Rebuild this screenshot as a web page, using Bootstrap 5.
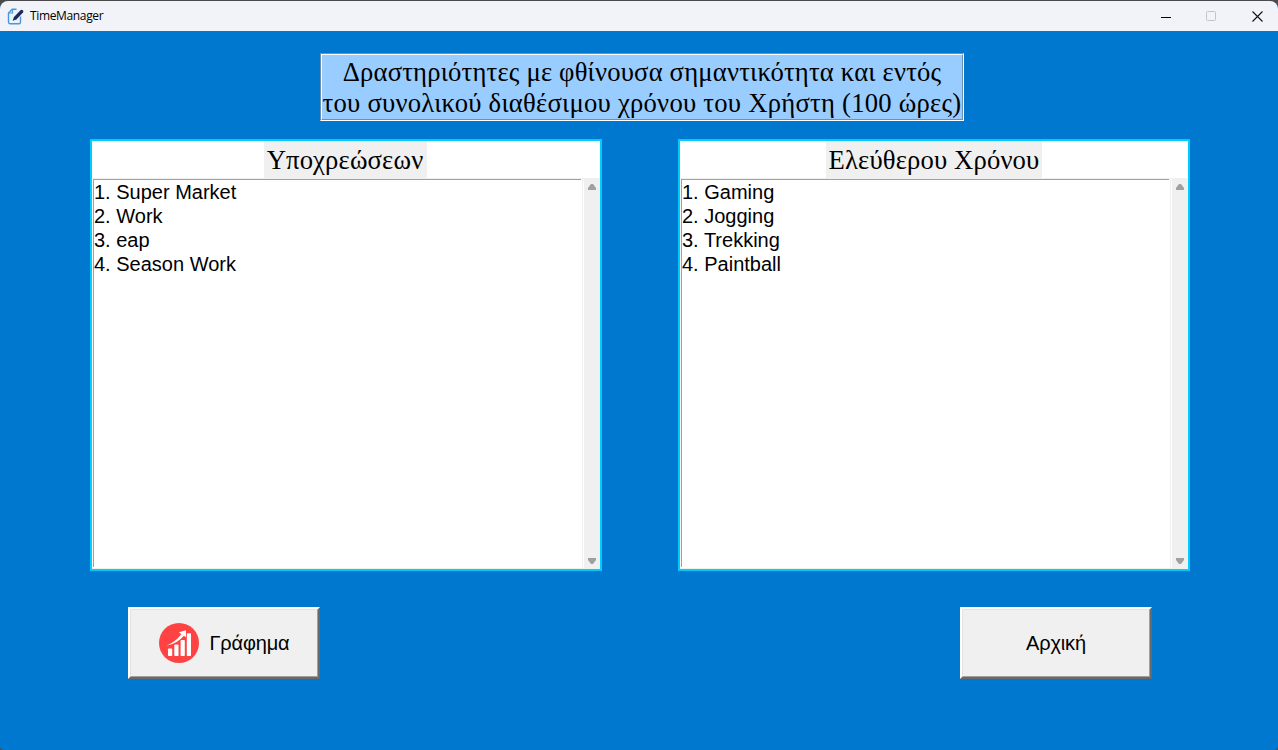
<!DOCTYPE html>
<html lang="el">
<head>
<meta charset="utf-8">
<meta name="viewport" content="width=device-width, initial-scale=1">
<title>TimeManager</title>
<link href="https://cdn.jsdelivr.net/npm/bootstrap@5.3.0/dist/css/bootstrap.min.css" rel="stylesheet">
<style>
body{background:#4b4a4c;font-family:"Liberation Sans",Arial,sans-serif;color:#000}
.window{width:1278px;height:750px;padding-top:1px}
.window-inner{background:#0078d0;border-radius:8px 8px 4px 4px;height:749px}
.titlebar{height:30px;background:#f1f3f9;font:12px/30px "Open Sans","Noto Sans",sans-serif;padding-left:7px}
.app-name{letter-spacing:-.35px;margin-left:6px}
.win-btn{width:45.5px;height:28px}
.win-btns{margin-right:-2px}
.heading{width:644px;height:68px;margin:22px 0 0 320px;background:#99ccff;border:1px solid;border-color:#6f8fae #fff #fff #6f8fae;font:26.67px/31px "Liberation Serif","Times New Roman",serif}
.heading-in{height:66px;border:1px solid;border-color:#fff #6f8fae #6f8fae #fff;padding-top:2px}
.h-one{letter-spacing:.18px}
.h-two{letter-spacing:.24px}
.panels{margin:18px 88px 0 90px}
.panel{width:512px;height:432px;border:2px solid #00ccff;background:#fff}
.panel-label{height:37px;background:#f0f0f0;font:26.67px/37px "Liberation Serif","Times New Roman",serif;padding-top:1px;letter-spacing:.15px}
.label-left{width:163px;margin-right:2px}
.label-right{width:216px}
.listbox{height:391px;border-top:1px solid #f0f0f0;border-bottom:1px solid #f0f0f0}
.items{border:1px solid #a0a0a0;border-width:1px 0 0 1px;margin-left:1px;width:488px;height:388px;font-size:20px;line-height:24px}
.items li{height:24px}
.scroller{width:18px;border-left:1px solid #f0f0f0}
.track{width:16px;background:#f0f0f0;padding:5px 0 4px}
.actions{margin:36px 126px 0 128px}
.tk-btn{width:192px;height:72px;background:#f0f0f0;border:2px solid;border-color:#fff #696969 #696969 #fff;font-size:20px;color:#000;padding:0}
.tk-face{width:188px;height:68px;border:1px solid;border-color:#e3e3e3 #a0a0a0 #a0a0a0 #e3e3e3;letter-spacing:-.15px}
.tk-gap{gap:9px}
</style>
</head>
<body class="overflow-hidden">
<div class="window">
<div class="window-inner overflow-hidden">
  <header class="titlebar d-flex align-items-center">
    <svg width="17" height="17" viewBox="0 0 17 17" fill="none"><path d="M9.500 1.200H5.200L1.500 5v9Q1.500 15.700 3 15.700h9q1.500 0 1.500-1.500V8.500" fill="#e6f2fc" stroke="#4d96d9" stroke-width="1.400"/><path d="M5.500 1.500V5h-4" stroke="#4d96d9" stroke-width="1.200"/><path d="M5.600 12.700 7 8.900 13.500 2.200q1.400-.9 2.400.2t.1 2.200L9.400 11.500z" fill="#20265e"/></svg>
    <span class="app-name">TimeManager</span>
    <div class="win-btns d-flex ms-auto">
      <div class="win-btn d-flex align-items-center justify-content-center"><svg width="11" height="11"><path d="M0 6.500h10" stroke="#000"/></svg></div>
      <div class="win-btn d-flex align-items-center justify-content-center"><svg width="11" height="11"><rect x=".5" y=".5" width="9" height="9" rx="1" fill="none" stroke="#c2c4ca"/></svg></div>
      <div class="win-btn d-flex align-items-center justify-content-center"><svg width="11" height="11"><path d="m.5.500 10 10m0-10-10 10" stroke="#111" stroke-width="1.100"/></svg></div>
    </div>
  </header>

  <div class="heading"><div class="heading-in d-flex flex-column align-items-center text-nowrap"><span class="h-one">Δραστηριότητες με φθίνουσα σημαντικότητα και εντός</span><span class="h-two">του συνολικού διαθέσιμου χρόνου του Χρήστη (100 ώρες)</span></div></div>

  <main class="panels d-flex justify-content-between">
    <section class="panel">
      <div class="d-flex justify-content-center"><div class="panel-label label-left text-center text-nowrap">Υποχρεώσεων</div></div>
      <div class="listbox d-flex justify-content-between">
        <ul class="items list-unstyled mb-0"><li>1. Super Market</li><li>2. Work</li><li>3. eap</li><li>4. Season Work</li></ul>
        <div class="scroller d-flex justify-content-end"><div class="track d-flex flex-column justify-content-between align-items-center"><svg width="8" height="6"><path d="M3 0h2l3 4v2H0V4z" fill="#a0a0a0"/></svg><svg width="8" height="6"><path d="M0 0h8v2L5 6H3L0 2z" fill="#a0a0a0"/></svg></div></div>
      </div>
    </section>
    <section class="panel">
      <div class="d-flex justify-content-center"><div class="panel-label label-right text-center text-nowrap">Ελεύθερου Χρόνου</div></div>
      <div class="listbox d-flex justify-content-between">
        <ul class="items list-unstyled mb-0"><li>1. Gaming</li><li>2. Jogging</li><li>3. Trekking</li><li>4. Paintball</li></ul>
        <div class="scroller d-flex justify-content-end"><div class="track d-flex flex-column justify-content-between align-items-center"><svg width="8" height="6"><path d="M3 0h2l3 4v2H0V4z" fill="#a0a0a0"/></svg><svg width="8" height="6"><path d="M0 0h8v2L5 6H3L0 2z" fill="#a0a0a0"/></svg></div></div>
      </div>
    </section>
  </main>

  <footer class="actions d-flex justify-content-between">
    <button class="tk-btn btn rounded-0"><span class="tk-face tk-gap d-flex align-items-center justify-content-center">
      <svg width="42" height="42" viewBox="0 0 42 42"><circle cx="21" cy="21" r="20" fill="#ff4343"/><g fill="#fff"><rect x="10" y="26.500" width="4.200" height="7.500" rx=".8"/><rect x="16.300" y="22.500" width="4.200" height="11.500" rx=".8"/><rect x="22.600" y="18" width="4.200" height="16" rx=".8"/><rect x="28.800" y="11.200" width="4.200" height="22.800" rx=".8"/><path d="M8 23.700Q17.500 20 23.300 12.200L21 10.200 28 8.300V15.200L25.900 13.700Q19 22 8 23.700z"/></g></svg>
      <span>Γράφημα</span></span></button>
    <button class="tk-btn btn rounded-0"><span class="tk-face d-flex align-items-center justify-content-center">Αρχική</span></button>
  </footer>
</div>
</div>
<script src="https://cdn.jsdelivr.net/npm/bootstrap@5.3.0/dist/js/bootstrap.bundle.min.js"></script>
</body>
</html>
